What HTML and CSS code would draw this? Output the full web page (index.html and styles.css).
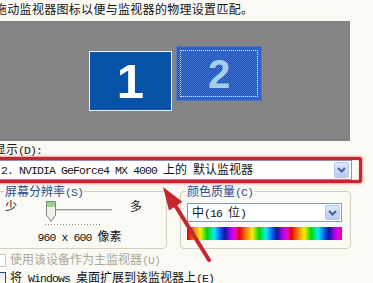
FILE: index.html
```html
<!DOCTYPE html>
<html lang="zh-CN">
<head>
<meta charset="utf-8">
<title>显示属性</title>
<link rel="stylesheet" href="styles.css">
</head>
<body>
<div class="page">
  <p class="intro">拖动监视器图标以便与监视器的物理设置匹配。</p>
  <div class="preview">
    <div class="mon mon1">1</div>
    <div class="mon mon2"><div class="mon2-inner">2</div></div>
  </div>
  <div class="display-label">显示<span class="m">(D):</span></div>
  <div class="display-row">
    <div class="select wide">
      <span class="select-text"><span class="m">2. NVIDIA GeForce4 MX 4000 </span>上的<span class="m"> </span>默认监视器</span>
      <span class="drop"><svg width="9" height="6" viewBox="0 0 9 6"><path d="M1 1 L4.5 4.5 L8 1" fill="none" stroke="#4d6185" stroke-width="2"/></svg></span>
    </div>
    <div class="highlight"></div>
  </div>
  <div class="groups">
    <div class="group group-res">
      <div class="group-title">屏幕分辨率<span class="m">(S)</span></div>
      <div class="res-row">
        <span class="res-end">少</span>
        <div class="slider">
          <div class="track"></div>
          <div class="ticks"></div>
          <svg class="thumb" width="12" height="23" viewBox="0 0 12 23"><path d="M1.5 1.5 H10.5 V15 L6 21.5 L1.5 15 Z" fill="#f1f1ec" stroke="#7c8a7a"/><rect x="2" y="2" width="8" height="5" fill="#9fd28e"/></svg>
        </div>
        <span class="res-end">多</span>
      </div>
      <div class="res-text"><span class="m">960 x 600 </span>像素</div>
    </div>
    <div class="group group-color">
      <div class="group-title">颜色质量<span class="m">(C)</span></div>
      <div class="select small">
        <span class="select-text">中<span class="m">(16 </span>位<span class="m">)</span></span>
        <span class="drop"><svg width="9" height="6" viewBox="0 0 9 6"><path d="M1 1 L4.5 4.5 L8 1" fill="none" stroke="#4d6185" stroke-width="2"/></svg></span>
      </div>
      <div class="colorbar"></div>
    </div>
  </div>
  <div class="check-row first disabled"><span class="box"></span><span>使用该设备作为主监视器<span class="m">(U)</span></span></div>
  <div class="check-row second"><span class="box"></span><span>将<span class="m"> Windows </span>桌面扩展到该监视器上<span class="m">(E)</span></span></div>
  <svg class="arrow" width="373" height="283" viewBox="0 0 373 283">
    <line x1="175" y1="205" x2="209" y2="260" stroke="#c4282e" stroke-width="4" stroke-linecap="round"/>
    <polygon points="163,187 169,210.6 182.4,201.8" fill="#c4282e"/>
  </svg>
</div>
</body>
</html>
```
FILE: styles.css
```css
body {
  margin: 0;
  background: #faf9f4;
  font-family: "Noto Sans CJK SC", sans-serif;
  font-size: 12px;
  color: #141414;
  overflow: hidden;
}
.page {
  position: relative;
  width: 373px;
  height: 283px;
  overflow: hidden;
  display: flex;
  flex-direction: column;
}
.m {
  font-family: "Liberation Mono", monospace;
  font-size: 11.5px;
  letter-spacing: -0.9px;
}
.intro {
  margin: 0 0 0 -5px;
  height: 21px;
  line-height: 18px;
  letter-spacing: 0.3px;
  white-space: nowrap;
  flex: none;
}
.preview {
  position: relative;
  width: 350px;
  height: 120px;
  background: #848484;
  flex: none;
}
.mon {
  position: absolute;
  box-sizing: border-box;
  display: flex;
  align-items: center;
  justify-content: center;
  font-family: "Liberation Sans", Arial, sans-serif;
  font-weight: bold;
  line-height: 1;
}
.mon1 {
  left: 89px;
  top: 30px;
  width: 83px;
  height: 60px;
  background: #0652a6;
  border: 1px solid #eef3fa;
  color: #fff;
  font-size: 49px;
}
.mon2 {
  left: 176px;
  top: 25px;
  width: 86px;
  height: 55px;
  background: repeating-conic-gradient(#2254b6 0 25%, #3d70cf 0 50%) 0 0 / 2px 2px;
  border: 1px solid #4a78cc;
  padding: 3px;
}
.mon2-inner {
  flex: 1;
  align-self: stretch;
  border: 1px dotted #e8f0ff;
  display: flex;
  align-items: center;
  justify-content: center;
  color: #a4cfe6;
  font-size: 40px;
}
.display-label {
  height: 16px;
  line-height: 16px;
  margin-left: -6px;
  white-space: nowrap;
  flex: none;
}
.display-row {
  position: relative;
  height: 26px;
  flex: none;
}
.select {
  box-sizing: border-box;
  display: flex;
  align-items: center;
  background: #fff;
  border: 1px solid #7f9db9;
  white-space: nowrap;
}
.select.wide {
  margin: 3px 0 0 -4px;
  width: 356px;
  height: 20px;
  padding: 0 2px 0 4px;
}
.select-text {
  flex: 1;
  line-height: 18px;
  overflow: hidden;
}
.drop {
  width: 15px;
  height: 16px;
  box-sizing: border-box;
  border-radius: 2px;
  background: linear-gradient(#dde7fd, #b8cbf6);
  border: 1px solid #b4c7ef;
  display: flex;
  align-items: center;
  justify-content: center;
  flex: none;
}
.highlight {
  position: absolute;
  left: -10px;
  top: 0;
  width: 372px;
  height: 26px;
  box-sizing: border-box;
  border: 3px solid #c8262d;
  border-radius: 2px;
  box-shadow: 0 0 2px 1px rgba(210, 60, 60, 0.45), inset 0 0 2px rgba(210, 60, 60, 0.45);
}
.groups {
  display: flex;
  gap: 13px;
  margin: 8px 0 0 -5px;
  flex: none;
}
.group {
  box-sizing: border-box;
  height: 58px;
  border: 1px solid #d0d0bf;
  border-radius: 4px;
}
.group-res {
  width: 172px;
  padding-left: 9px;
}
.group-color {
  width: 171px;
  padding: 0 8px 0 6px;
}
.group-title {
  margin: -7px 0 0 -1px;
  height: 12px;
  line-height: 12px;
  width: fit-content;
  background: #faf9f4;
  padding: 0 1px;
  color: #2b4b8e;
  white-space: nowrap;
}
.res-row {
  display: flex;
  height: 28px;
}
.res-end {
  margin-top: 3px;
  line-height: 12px;
  height: 12px;
  width: 12px;
}
.slider {
  position: relative;
  width: 113px;
}
.track {
  margin: 12px 0 0 30px;
  width: 65px;
  height: 1px;
  background: #d8d6ce;
  border-top: 1px solid #a09e98;
  border-bottom: 1px solid #fff;
}
.ticks {
  margin: 12px 0 0 28px;
  width: 57px;
  height: 1px;
  background: repeating-linear-gradient(90deg, #8a8a8a 0 1px, transparent 1px 3px);
}
.thumb {
  position: absolute;
  left: 28px;
  top: 3px;
}
.res-text {
  margin-top: 5px;
  padding-right: 12px;
  text-align: center;
  line-height: 12px;
  white-space: nowrap;
}
.select.small {
  margin-top: 6px;
  height: 19px;
  padding: 0 1px 0 4px;
}
.select.small .drop {
  height: 15px;
}
.colorbar {
  margin-top: 5px;
  height: 13px;
  background: repeating-linear-gradient(90deg,
    #d80000 0, #ff7a00 7px, #fff000 13px, #00d800 20px, #00f0f0 27px,
    #0064ff 33px, #1414a0 38px, #b400ff 44px, #ff00b4 49px, #d80000 52px);
}
.check-row {
  display: flex;
  align-items: center;
  gap: 4px;
  height: 16px;
  line-height: 16px;
  margin-left: -7px;
  white-space: nowrap;
  flex: none;
}
.check-row.first {
  margin-top: 3px;
}
.check-row.second {
  margin-top: 2px;
}
.box {
  width: 13px;
  height: 13px;
  box-sizing: border-box;
  border: 1px solid #1c5180;
  background: linear-gradient(135deg, #dcdcd7, #fff);
  flex: none;
}
.disabled {
  color: #aca899;
}
.disabled .box {
  border-color: #cac8bb;
  background: #fff;
}
.arrow {
  position: absolute;
  left: 0;
  top: 0;
  pointer-events: none;
}
```
